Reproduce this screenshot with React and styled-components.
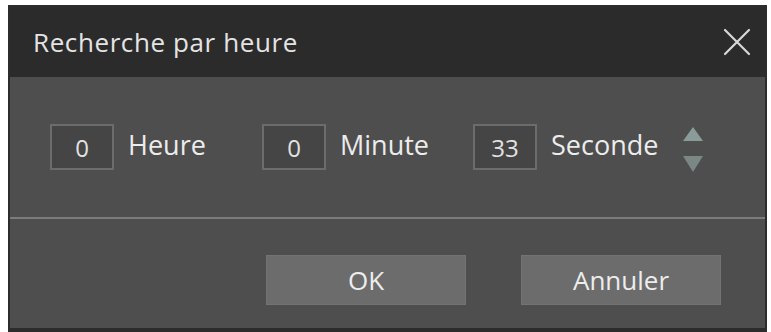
import React from "react";
import styled, { createGlobalStyle } from "styled-components";

const Global = createGlobalStyle`
  html, body { margin: 0; padding: 0; background: #ffffff; }
  body { padding: 5px 4px 0 8px; font-family: "Open Sans", "Noto Sans", sans-serif; }
`;

const Dialog = styled.div`
  width: 759px;
  height: 327px;
  box-sizing: border-box;
  background: #4e4e4e;
  border: 2px solid #2c2c2c;
  border-bottom-width: 4px;
  display: flex;
  flex-direction: column;
  color: #e8e8e8;
`;

const TitleBar = styled.div`
  height: 70px;
  flex: none;
  background: #2b2b2b;
  display: flex;
  align-items: center;
  justify-content: space-between;
  padding: 0 14px 0 23px;
`;

const Title = styled.span`
  font-size: 26px;
  color: #e4e4e4;
  letter-spacing: 0.6px;
`;

const Close = styled.button`
  all: unset;
  width: 28px;
  height: 28px;
  display: flex;
  align-items: center;
  justify-content: center;
`;

const Body = styled.div`
  flex: 1;
  display: flex;
  flex-direction: column;
`;

const FieldsRow = styled.div`
  height: 140px;
  display: flex;
  align-items: center;
  padding: 0 0 0 40px;
  box-sizing: border-box;
`;

const Field = styled.div`
  display: flex;
  align-items: center;
  gap: 14px;
  width: ${(p) => (p.$w ? `${p.$w}px` : "auto")};
`;

const Box = styled.div`
  width: 64px;
  height: 46px;
  box-sizing: border-box;
  border: 2px solid #6c6c6c;
  background: #454545;
  display: flex;
  align-items: center;
  justify-content: center;
  font-size: 24px;
  color: #e2e2e2;
`;

const Label = styled.span`
  font-size: 27px;
  color: #ececec;
  margin-top: -6px;
`;

const Spinner = styled.div`
  margin-left: 25px;
  display: flex;
  flex-direction: column;
  gap: 15px;
  margin-top: 4px;
`;

const Separator = styled.div`
  height: 2px;
  background: #7c7c7c;
  flex: none;
`;

const Footer = styled.div`
  flex: 1;
  display: flex;
  justify-content: flex-end;
  align-items: flex-start;
  gap: 55px;
  padding: 36px 44px 0 0;
`;

const Button = styled.button`
  all: unset;
  width: 200px;
  height: 50px;
  box-sizing: border-box;
  background: #6c6c6c;
  border: 1px solid #737373;
  display: flex;
  align-items: center;
  justify-content: center;
  font-family: "Open Sans", "Noto Sans", sans-serif;
  font-size: 26px;
  color: #ededed;
`;

export default function App() {
  return (
    <>
      <Global />
      <Dialog>
        <TitleBar>
          <Title>Recherche par heure</Title>
          <Close aria-label="Fermer">
            <svg width="28" height="28" viewBox="0 0 28 28">
              <path d="M2 2 L26 26 M26 2 L2 26" stroke="#d8d8d8" strokeWidth="2.2" strokeLinecap="round" />
            </svg>
          </Close>
        </TitleBar>
        <Body>
          <FieldsRow>
            <Field $w={212}>
              <Box>0</Box>
              <Label>Heure</Label>
            </Field>
            <Field $w={211}>
              <Box>0</Box>
              <Label>Minute</Label>
            </Field>
            <Field>
              <Box>33</Box>
              <Label>Seconde</Label>
            </Field>
            <Spinner>
              <svg width="20" height="14" viewBox="0 0 20 14">
                <path d="M10 0 L20 14 L0 14 Z" fill="#8a9c99" />
              </svg>
              <svg width="20" height="16" viewBox="0 0 20 16">
                <path d="M0 0 L20 0 L10 16 Z" fill="#7a8785" />
              </svg>
            </Spinner>
          </FieldsRow>
          <Separator />
          <Footer>
            <Button>OK</Button>
            <Button>Annuler</Button>
          </Footer>
        </Body>
      </Dialog>
    </>
  );
}
